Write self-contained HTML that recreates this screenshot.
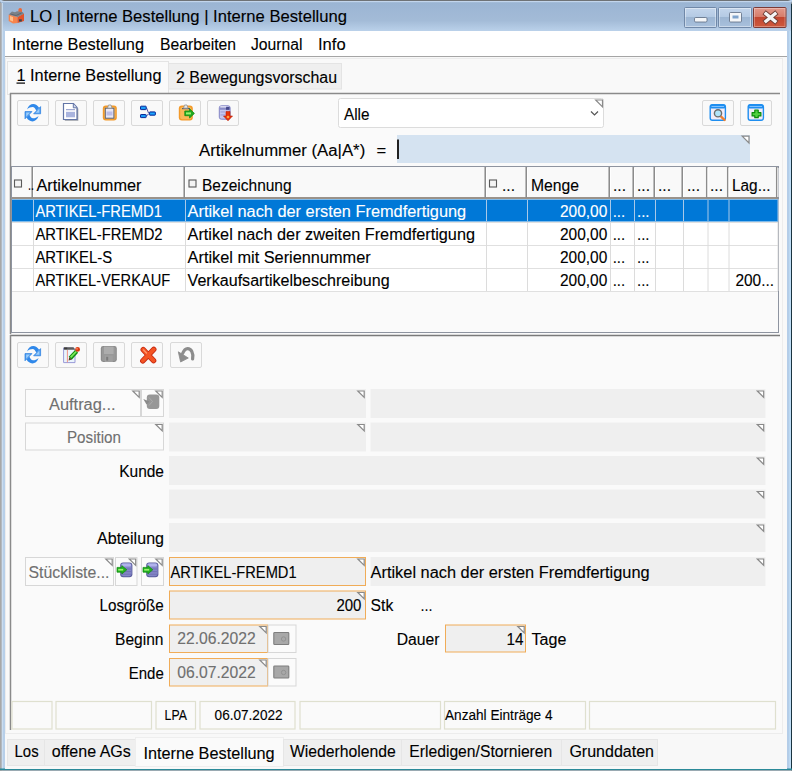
<!DOCTYPE html>
<html><head><meta charset="utf-8"><style>
html,body{margin:0;padding:0;width:792px;height:771px;overflow:hidden;background:#f3f3f3}
svg{display:block}
text{font-family:"Liberation Sans",sans-serif;stroke-width:0.12px}
</style></head><body>
<svg width="792" height="771" viewBox="0 0 792 771">
<rect x="0" y="0" width="792" height="771" fill="#b7cfe9" />
<path d="M0.5,771 L0.5,4 Q0.5,0.5 4,0.5 L788,0.5 Q791.5,0.5 791.5,4 L791.5,771" fill="none" stroke="#6e7276" stroke-width="1"/>
<defs><linearGradient id="tg" x1="0" y1="0" x2="0" y2="1"><stop offset="0" stop-color="#9ab4d3"/><stop offset="0.65" stop-color="#a3bbd7"/><stop offset="1" stop-color="#bad1ea"/></linearGradient><linearGradient id="bg" x1="0" y1="0" x2="0" y2="1"><stop offset="0" stop-color="#c4d6ec"/><stop offset="0.5" stop-color="#b3c9e3"/><stop offset="0.5" stop-color="#9db6d3"/><stop offset="1" stop-color="#a9c1dd"/></linearGradient><linearGradient id="cg" x1="0" y1="0" x2="0" y2="1"><stop offset="0" stop-color="#e39a8c"/><stop offset="0.5" stop-color="#d57a68"/><stop offset="0.5" stop-color="#c24630"/><stop offset="1" stop-color="#cf5a3e"/></linearGradient></defs>
<rect x="1" y="1" width="790" height="30" fill="url(#tg)" />
<rect x="1" y="1" width="790" height="1.2" fill="#c2d5ec" />
<rect x="0" y="3" width="1.8" height="768" fill="#a8a8a8" />
<rect x="1.8" y="3" width="1" height="768" fill="#cfe0f2" />
<rect x="787" y="31" width="4" height="740" fill="#b4cde8" />
<rect x="789.5" y="31" width="1.2" height="740" fill="#c2e4fc" />
<line x1="791.5" y1="4" x2="791.5" y2="771" stroke="#1a3440" stroke-width="1"/>
<rect x="0" y="768.5" width="792" height="1.7" fill="#2b8a99" />
<rect x="0" y="770.2" width="792" height="0.8" fill="#9aa4a8" />
<g><rect x="18.4" y="8" width="3.6" height="5.5" rx="1.8" fill="#ec6a3a"/><path d="M8.7,14.5 L17.5,17 L17.5,23 L13,23.6 L8.7,21 Z" fill="#f7844c"/><path d="M10,16 L13,17 L13,21.5 L10,20.2 Z" fill="#ffc08a"/><path d="M17.5,17 L24,13.5 L24,21 L17.5,23 Z" fill="#e2542a"/><path d="M8.7,14.5 L12,11.6 L15,12.2 L17,11.2 L22.5,12 L24,13.5 L17.5,17 Z" fill="#7c8288"/><path d="M10.5,14 L16,15.5 L21.5,13" fill="none" stroke="#5a6066" stroke-width="0.8"/><rect x="19" y="19.3" width="2.8" height="2.2" fill="#3c4650"/></g>
<text x="30" y="22" font-size="16" fill="#000" stroke="#000" textLength="317" lengthAdjust="spacingAndGlyphs" >LO | Interne Bestellung | Interne Bestellung</text>
<rect x="684.5" y="7.5" width="32" height="20" fill="url(#bg)" stroke="#7088a8" stroke-width="1" rx="1" />
<rect x="685.5" y="8.5" width="30" height="18" fill="none" stroke="rgba(255,255,255,0.4)" stroke-width="1"/>
<rect x="718.5" y="7.5" width="33" height="20" fill="url(#bg)" stroke="#7088a8" stroke-width="1" rx="1" />
<rect x="719.5" y="8.5" width="31" height="18" fill="none" stroke="rgba(255,255,255,0.4)" stroke-width="1"/>
<rect x="753.5" y="7.5" width="32.5" height="20" rx="1" fill="url(#cg)" stroke="#7c3a36" stroke-width="1"/>
<rect x="754.5" y="8.5" width="30.5" height="18" fill="none" stroke="rgba(255,255,255,0.3)" stroke-width="1"/>
<rect x="694.5" y="17.5" width="12.5" height="4.5" rx="1.2" fill="#f4f6f8" stroke="#5a6a80" stroke-width="0.8"/>
<rect x="729.5" y="12.5" width="12" height="9.5" rx="1" fill="#f4f6f8" stroke="#5a6a80" stroke-width="0.8"/>
<rect x="732.5" y="15.5" width="6" height="3" fill="#7fa3cc"/>
<path d="M766,13.8 L775,21.2 M775,13.8 L766,21.2" stroke="#6a3a32" stroke-width="5" stroke-linecap="square"/>
<path d="M766,13.8 L775,21.2 M775,13.8 L766,21.2" stroke="#f4f4f4" stroke-width="3.4" stroke-linecap="square"/>
<rect x="5" y="31" width="782" height="25" fill="#ffffff" />
<rect x="5" y="56" width="782" height="1" fill="#a5a5a5" />
<text x="12" y="50" font-size="16" fill="#000" stroke="#000" textLength="132" lengthAdjust="spacingAndGlyphs" >Interne Bestellung</text>
<text x="160" y="50" font-size="16" fill="#000" stroke="#000" textLength="76" lengthAdjust="spacingAndGlyphs" >Bearbeiten</text>
<text x="251" y="50" font-size="16" fill="#000" stroke="#000" textLength="51.5" lengthAdjust="spacingAndGlyphs" >Journal</text>
<text x="318" y="50" font-size="16" fill="#000" stroke="#000" textLength="27.6" lengthAdjust="spacingAndGlyphs" >Info</text>
<rect x="5" y="57" width="782" height="712" fill="#f8f8f8" />
<rect x="5.5" y="58.5" width="777" height="675" fill="#f9f9f9" stroke="#ececec" stroke-width="1" />
<rect x="7.5" y="61.5" width="161" height="33" fill="#fafafa" stroke="#e4e4e4" stroke-width="1" />
<rect x="168.5" y="63.5" width="173" height="25.5" fill="#efefef" stroke="#e4e4e4" stroke-width="1" />
<text x="16.5" y="81" font-size="16" fill="#000" stroke="#000" textLength="145" lengthAdjust="spacingAndGlyphs" >1 Interne Bestellung</text>
<rect x="16.5" y="82.5" width="8.5" height="1.2" fill="#000" />
<text x="176" y="83" font-size="16" fill="#000" stroke="#000" textLength="161" lengthAdjust="spacingAndGlyphs" >2 Bewegungsvorschau</text>
<rect x="10.5" y="93.5" width="770" height="240" fill="#fafafa" />
<line x1="10" y1="93.5" x2="780" y2="93.5" stroke="#8a8a8a" stroke-width="1.5"/>
<line x1="10.5" y1="93" x2="10.5" y2="334" stroke="#8a8a8a" stroke-width="1.5"/>
<rect x="17.5" y="100.5" width="31" height="25" fill="#f9f9f9" stroke="#d9d9d9" stroke-width="1" rx="1.5" />
<rect x="55.5" y="100.5" width="31" height="25" fill="#f9f9f9" stroke="#d9d9d9" stroke-width="1" rx="1.5" />
<rect x="93.5" y="100.5" width="31" height="25" fill="#f9f9f9" stroke="#d9d9d9" stroke-width="1" rx="1.5" />
<rect x="131.5" y="100.5" width="31" height="25" fill="#f9f9f9" stroke="#d9d9d9" stroke-width="1" rx="1.5" />
<rect x="169.5" y="100.5" width="31" height="25" fill="#f9f9f9" stroke="#d9d9d9" stroke-width="1" rx="1.5" />
<rect x="207.5" y="100.5" width="31" height="25" fill="#f9f9f9" stroke="#d9d9d9" stroke-width="1" rx="1.5" />
<rect x="338.5" y="98.5" width="265" height="29" fill="#ffffff" stroke="#dcdcdc" stroke-width="1" rx="2" />
<text x="344" y="119.6" font-size="16" fill="#000" stroke="#000" textLength="25.5" lengthAdjust="spacingAndGlyphs" >Alle</text>
<path d="M591,111.5 L594.5,115 L598,111.5" fill="none" stroke="#555" stroke-width="1.2"/>
<path d="M595.7,100 L602.5,100 L602.5,106.8 Z" fill="#ffffff" stroke="#8a8a8a" stroke-width="1.2"/>
<rect x="702.5" y="100.5" width="31" height="25" fill="#f9f9f9" stroke="#d9d9d9" stroke-width="1" rx="1.5" />
<rect x="740.5" y="100.5" width="31" height="25" fill="#f9f9f9" stroke="#d9d9d9" stroke-width="1" rx="1.5" />
<text x="199" y="156" font-size="16" fill="#000" stroke="#000" textLength="166.2" lengthAdjust="spacingAndGlyphs" >Artikelnummer (Aa|A*)</text>
<text x="376.6" y="156" font-size="16" fill="#000" stroke="#000" textLength="9.7" lengthAdjust="spacingAndGlyphs" >=</text>
<rect x="397" y="135" width="353" height="28" fill="#d5e3f1" />
<rect x="397" y="139.5" width="2" height="19.5" fill="#222" />
<path d="M742.2,136.2 L749,136.2 L749,143.0 Z" fill="#ffffff" stroke="#8a8a8a" stroke-width="1.2"/>
<rect x="11.5" y="166.5" width="767" height="166" fill="#fafafa" stroke="#8e94a0" stroke-width="1" />
<rect x="12" y="167" width="766" height="31" fill="#f9f9f9" />
<rect x="12" y="199" width="766" height="92" fill="#ffffff" />
<line x1="12" y1="198" x2="778" y2="198" stroke="#9a928a" stroke-width="1.8"/>
<line x1="32.25" y1="167" x2="32.25" y2="198" stroke="#8c8c8c" stroke-width="1.6"/>
<line x1="33.5" y1="168" x2="33.5" y2="197" stroke="#ffffff" stroke-width="1"/>
<line x1="184.25" y1="167" x2="184.25" y2="198" stroke="#8c8c8c" stroke-width="1.6"/>
<line x1="185.5" y1="168" x2="185.5" y2="197" stroke="#ffffff" stroke-width="1"/>
<line x1="485.25" y1="167" x2="485.25" y2="198" stroke="#8c8c8c" stroke-width="1.6"/>
<line x1="486.5" y1="168" x2="486.5" y2="197" stroke="#ffffff" stroke-width="1"/>
<line x1="526.25" y1="167" x2="526.25" y2="198" stroke="#8c8c8c" stroke-width="1.6"/>
<line x1="527.5" y1="168" x2="527.5" y2="197" stroke="#ffffff" stroke-width="1"/>
<line x1="609.25" y1="167" x2="609.25" y2="198" stroke="#8c8c8c" stroke-width="1.6"/>
<line x1="610.5" y1="168" x2="610.5" y2="197" stroke="#ffffff" stroke-width="1"/>
<line x1="633.25" y1="167" x2="633.25" y2="198" stroke="#8c8c8c" stroke-width="1.6"/>
<line x1="634.5" y1="168" x2="634.5" y2="197" stroke="#ffffff" stroke-width="1"/>
<line x1="654.25" y1="167" x2="654.25" y2="198" stroke="#8c8c8c" stroke-width="1.6"/>
<line x1="655.5" y1="168" x2="655.5" y2="197" stroke="#ffffff" stroke-width="1"/>
<line x1="682.25" y1="167" x2="682.25" y2="198" stroke="#8c8c8c" stroke-width="1.6"/>
<line x1="683.5" y1="168" x2="683.5" y2="197" stroke="#ffffff" stroke-width="1"/>
<line x1="706.75" y1="167" x2="706.75" y2="198" stroke="#8c8c8c" stroke-width="1.6"/>
<line x1="708.0" y1="168" x2="708.0" y2="197" stroke="#ffffff" stroke-width="1"/>
<line x1="727.75" y1="167" x2="727.75" y2="198" stroke="#8c8c8c" stroke-width="1.6"/>
<line x1="729.0" y1="168" x2="729.0" y2="197" stroke="#ffffff" stroke-width="1"/>
<line x1="776.75" y1="167" x2="776.75" y2="198" stroke="#8c8c8c" stroke-width="1.6"/>
<line x1="778.0" y1="168" x2="778.0" y2="197" stroke="#ffffff" stroke-width="1"/>
<line x1="12" y1="222.5" x2="778" y2="222.5" stroke="#e0e0e0" stroke-width="1"/>
<line x1="12" y1="245.5" x2="778" y2="245.5" stroke="#e0e0e0" stroke-width="1"/>
<line x1="12" y1="268.5" x2="778" y2="268.5" stroke="#e0e0e0" stroke-width="1"/>
<line x1="12" y1="291.5" x2="778" y2="291.5" stroke="#e0e0e0" stroke-width="1"/>
<line x1="33.5" y1="199" x2="33.5" y2="291" stroke="#dcdcdc" stroke-width="1"/>
<line x1="185.5" y1="199" x2="185.5" y2="291" stroke="#dcdcdc" stroke-width="1"/>
<line x1="486.5" y1="199" x2="486.5" y2="291" stroke="#dcdcdc" stroke-width="1"/>
<line x1="527.5" y1="199" x2="527.5" y2="291" stroke="#dcdcdc" stroke-width="1"/>
<line x1="610.5" y1="199" x2="610.5" y2="291" stroke="#dcdcdc" stroke-width="1"/>
<line x1="634.5" y1="199" x2="634.5" y2="291" stroke="#dcdcdc" stroke-width="1"/>
<line x1="655.5" y1="199" x2="655.5" y2="291" stroke="#dcdcdc" stroke-width="1"/>
<line x1="683.5" y1="199" x2="683.5" y2="291" stroke="#dcdcdc" stroke-width="1"/>
<line x1="708.0" y1="199" x2="708.0" y2="291" stroke="#dcdcdc" stroke-width="1"/>
<line x1="729.0" y1="199" x2="729.0" y2="291" stroke="#dcdcdc" stroke-width="1"/>
<line x1="778.0" y1="199" x2="778.0" y2="291" stroke="#dcdcdc" stroke-width="1"/>
<rect x="12" y="199.5" width="766" height="22" fill="#0078d7" />
<line x1="33.5" y1="199.5" x2="33.5" y2="221.5" stroke="#a8c8e8" stroke-width="1"/>
<line x1="185.5" y1="199.5" x2="185.5" y2="221.5" stroke="#a8c8e8" stroke-width="1"/>
<line x1="486.5" y1="199.5" x2="486.5" y2="221.5" stroke="#a8c8e8" stroke-width="1"/>
<line x1="527.5" y1="199.5" x2="527.5" y2="221.5" stroke="#a8c8e8" stroke-width="1"/>
<line x1="610.5" y1="199.5" x2="610.5" y2="221.5" stroke="#a8c8e8" stroke-width="1"/>
<line x1="634.5" y1="199.5" x2="634.5" y2="221.5" stroke="#a8c8e8" stroke-width="1"/>
<line x1="655.5" y1="199.5" x2="655.5" y2="221.5" stroke="#a8c8e8" stroke-width="1"/>
<line x1="683.5" y1="199.5" x2="683.5" y2="221.5" stroke="#a8c8e8" stroke-width="1"/>
<line x1="708.0" y1="199.5" x2="708.0" y2="221.5" stroke="#a8c8e8" stroke-width="1"/>
<line x1="729.0" y1="199.5" x2="729.0" y2="221.5" stroke="#a8c8e8" stroke-width="1"/>
<line x1="778.0" y1="199.5" x2="778.0" y2="221.5" stroke="#a8c8e8" stroke-width="1"/>
<rect x="14.5" y="180.0" width="7" height="7" fill="#f4f4f4" stroke="#5a5a5a" stroke-width="1.1" />
<text x="28" y="190" font-size="14" fill="#000" stroke="#000" textLength="6" lengthAdjust="spacingAndGlyphs" >..</text>
<text x="36.5" y="190.5" font-size="16" fill="#000" stroke="#000" textLength="105" lengthAdjust="spacingAndGlyphs" >Artikelnummer</text>
<rect x="189.0" y="180.0" width="7" height="7" fill="#f4f4f4" stroke="#5a5a5a" stroke-width="1.1" />
<text x="202" y="190.5" font-size="16" fill="#000" stroke="#000" textLength="89.6" lengthAdjust="spacingAndGlyphs" >Bezeichnung</text>
<rect x="489.5" y="180.0" width="7" height="7" fill="#f4f4f4" stroke="#5a5a5a" stroke-width="1.1" />
<text x="502" y="190.5" font-size="16" fill="#000" stroke="#000" textLength="13" lengthAdjust="spacingAndGlyphs" >...</text>
<text x="531" y="190.5" font-size="16" fill="#000" stroke="#000" textLength="48" lengthAdjust="spacingAndGlyphs" >Menge</text>
<text x="613" y="190.5" font-size="16" fill="#000" stroke="#000" textLength="13" lengthAdjust="spacingAndGlyphs" >...</text>
<text x="637" y="190.5" font-size="16" fill="#000" stroke="#000" textLength="13" lengthAdjust="spacingAndGlyphs" >...</text>
<text x="658" y="190.5" font-size="16" fill="#000" stroke="#000" textLength="13" lengthAdjust="spacingAndGlyphs" >...</text>
<text x="687" y="190.5" font-size="16" fill="#000" stroke="#000" textLength="13" lengthAdjust="spacingAndGlyphs" >...</text>
<text x="710" y="190.5" font-size="16" fill="#000" stroke="#000" textLength="13" lengthAdjust="spacingAndGlyphs" >...</text>
<text x="732" y="190.5" font-size="16" fill="#000" stroke="#000" textLength="38.5" lengthAdjust="spacingAndGlyphs" >Lag...</text>
<text x="35.4" y="216.5" font-size="16" fill="#fff" stroke="#fff" textLength="126.5" lengthAdjust="spacingAndGlyphs" >ARTIKEL-FREMD1</text>
<text x="187.6" y="216.5" font-size="16" fill="#fff" stroke="#fff" textLength="278.6" lengthAdjust="spacingAndGlyphs" >Artikel nach der ersten Fremdfertigung</text>
<text x="560" y="216.5" font-size="16" fill="#fff" stroke="#fff" textLength="47.3" lengthAdjust="spacingAndGlyphs" >200,00</text>
<text x="612.7" y="216.5" font-size="16" fill="#fff" stroke="#fff" textLength="12.5" lengthAdjust="spacingAndGlyphs" >...</text>
<text x="637" y="216.5" font-size="16" fill="#fff" stroke="#fff" textLength="12.5" lengthAdjust="spacingAndGlyphs" >...</text>
<text x="35.4" y="240" font-size="16" fill="#000" stroke="#000" textLength="127.19999999999999" lengthAdjust="spacingAndGlyphs" >ARTIKEL-FREMD2</text>
<text x="187.6" y="240" font-size="16" fill="#000" stroke="#000" textLength="287.4" lengthAdjust="spacingAndGlyphs" >Artikel nach der zweiten Fremdfertigung</text>
<text x="560" y="240" font-size="16" fill="#000" stroke="#000" textLength="47.3" lengthAdjust="spacingAndGlyphs" >200,00</text>
<text x="612.7" y="240" font-size="16" fill="#000" stroke="#000" textLength="12.5" lengthAdjust="spacingAndGlyphs" >...</text>
<text x="637" y="240" font-size="16" fill="#000" stroke="#000" textLength="12.5" lengthAdjust="spacingAndGlyphs" >...</text>
<text x="35.4" y="263" font-size="16" fill="#000" stroke="#000" textLength="76.69999999999999" lengthAdjust="spacingAndGlyphs" >ARTIKEL-S</text>
<text x="187.6" y="263" font-size="16" fill="#000" stroke="#000" textLength="183.1" lengthAdjust="spacingAndGlyphs" >Artikel mit Seriennummer</text>
<text x="560" y="263" font-size="16" fill="#000" stroke="#000" textLength="47.3" lengthAdjust="spacingAndGlyphs" >200,00</text>
<text x="612.7" y="263" font-size="16" fill="#000" stroke="#000" textLength="12.5" lengthAdjust="spacingAndGlyphs" >...</text>
<text x="637" y="263" font-size="16" fill="#000" stroke="#000" textLength="12.5" lengthAdjust="spacingAndGlyphs" >...</text>
<text x="35.4" y="286" font-size="16" fill="#000" stroke="#000" textLength="134.79999999999998" lengthAdjust="spacingAndGlyphs" >ARTIKEL-VERKAUF</text>
<text x="187.6" y="286" font-size="16" fill="#000" stroke="#000" textLength="202.00000000000003" lengthAdjust="spacingAndGlyphs" >Verkaufsartikelbeschreibung</text>
<text x="560" y="286" font-size="16" fill="#000" stroke="#000" textLength="47.3" lengthAdjust="spacingAndGlyphs" >200,00</text>
<text x="612.7" y="286" font-size="16" fill="#000" stroke="#000" textLength="12.5" lengthAdjust="spacingAndGlyphs" >...</text>
<text x="637" y="286" font-size="16" fill="#000" stroke="#000" textLength="12.5" lengthAdjust="spacingAndGlyphs" >...</text>
<text x="735.5" y="286" font-size="16" fill="#000" stroke="#000" textLength="38.5" lengthAdjust="spacingAndGlyphs" >200...</text>
<rect x="10.5" y="335.5" width="770" height="394" fill="#fafafa" />
<line x1="10" y1="335.5" x2="780" y2="335.5" stroke="#7a7a7a" stroke-width="1.5"/>
<line x1="10.5" y1="335" x2="10.5" y2="730" stroke="#8a8a8a" stroke-width="1.5"/>
<rect x="17.5" y="342.5" width="31" height="25" fill="#f9f9f9" stroke="#d9d9d9" stroke-width="1" rx="1.5" />
<rect x="55.5" y="342.5" width="31" height="25" fill="#f9f9f9" stroke="#d9d9d9" stroke-width="1" rx="1.5" />
<rect x="93.5" y="342.5" width="31" height="25" fill="#f9f9f9" stroke="#d9d9d9" stroke-width="1" rx="1.5" />
<rect x="131.5" y="342.5" width="31" height="25" fill="#f9f9f9" stroke="#d9d9d9" stroke-width="1" rx="1.5" />
<rect x="170.5" y="342.5" width="31" height="25" fill="#f9f9f9" stroke="#d9d9d9" stroke-width="1" rx="1.5" />
<rect x="25.5" y="389.5" width="115" height="27" fill="#fbfbfb" stroke="#d7d7d7" stroke-width="1" />
<path d="M132.79999999999998,391 L139.2,391 L139.2,397.4 Z" fill="#ffffff" stroke="#8a8a8a" stroke-width="1.2"/>
<rect x="141.5" y="389.5" width="22" height="27" fill="#fbfbfb" stroke="#d7d7d7" stroke-width="1" />
<path d="M155.79999999999998,391 L162.2,391 L162.2,397.4 Z" fill="#ffffff" stroke="#8a8a8a" stroke-width="1.2"/>
<text x="49" y="409.5" font-size="16" fill="#707070" stroke="#707070" textLength="66.5" lengthAdjust="spacingAndGlyphs" >Auftrag...</text>
<rect x="169" y="389" width="197" height="29" fill="#efefef" />
<path d="M357.8,391 L364.2,391 L364.2,397.4 Z" fill="#ffffff" stroke="#8a8a8a" stroke-width="1.2"/>
<rect x="370.5" y="389" width="395" height="29" fill="#efefef" />
<path d="M757.3000000000001,391 L763.7,391 L763.7,397.4 Z" fill="#ffffff" stroke="#8a8a8a" stroke-width="1.2"/>
<rect x="25.5" y="423.0" width="138" height="27" fill="#fbfbfb" stroke="#d7d7d7" stroke-width="1" />
<path d="M155.79999999999998,424.5 L162.2,424.5 L162.2,430.9 Z" fill="#ffffff" stroke="#8a8a8a" stroke-width="1.2"/>
<text x="67" y="442.5" font-size="16" fill="#707070" stroke="#707070" textLength="54" lengthAdjust="spacingAndGlyphs" >Position</text>
<rect x="169" y="422.5" width="197" height="29" fill="#efefef" />
<path d="M357.8,424.5 L364.2,424.5 L364.2,430.9 Z" fill="#ffffff" stroke="#8a8a8a" stroke-width="1.2"/>
<rect x="370.5" y="422.5" width="395" height="29" fill="#efefef" />
<path d="M757.3000000000001,424.5 L763.7,424.5 L763.7,430.9 Z" fill="#ffffff" stroke="#8a8a8a" stroke-width="1.2"/>
<text x="164" y="477" font-size="16" fill="#000" stroke="#000" textLength="44.8" lengthAdjust="spacingAndGlyphs" text-anchor="end" >Kunde</text>
<rect x="169" y="456" width="596.5" height="29" fill="#efefef" />
<path d="M757.3000000000001,458 L763.7,458 L763.7,464.4 Z" fill="#ffffff" stroke="#8a8a8a" stroke-width="1.2"/>
<rect x="169" y="489.5" width="596.5" height="29" fill="#efefef" />
<path d="M757.3000000000001,491.5 L763.7,491.5 L763.7,497.9 Z" fill="#ffffff" stroke="#8a8a8a" stroke-width="1.2"/>
<text x="164" y="543.7" font-size="16" fill="#000" stroke="#000" textLength="67" lengthAdjust="spacingAndGlyphs" text-anchor="end" >Abteilung</text>
<rect x="169" y="523" width="596.5" height="29" fill="#efefef" />
<path d="M757.3000000000001,525 L763.7,525 L763.7,531.4 Z" fill="#ffffff" stroke="#8a8a8a" stroke-width="1.2"/>
<rect x="25.5" y="557.5" width="88" height="28" fill="#fbfbfb" stroke="#d7d7d7" stroke-width="1" />
<path d="M105.8,559 L112.2,559 L112.2,565.4 Z" fill="#ffffff" stroke="#8a8a8a" stroke-width="1.2"/>
<text x="28.5" y="577.6" font-size="16" fill="#707070" stroke="#707070" textLength="81" lengthAdjust="spacingAndGlyphs" >Stückliste...</text>
<rect x="115.5" y="557.5" width="21.5" height="28" fill="#fbfbfb" stroke="#d7d7d7" stroke-width="1" />
<path d="M129.29999999999998,559 L135.7,559 L135.7,565.4 Z" fill="#ffffff" stroke="#8a8a8a" stroke-width="1.2"/>
<rect x="141.5" y="557.5" width="22" height="28" fill="#fbfbfb" stroke="#d7d7d7" stroke-width="1" />
<path d="M155.79999999999998,559 L162.2,559 L162.2,565.4 Z" fill="#ffffff" stroke="#8a8a8a" stroke-width="1.2"/>
<rect x="169.5" y="557.5" width="196" height="28" fill="#efefef" stroke="#f0ac58" stroke-width="1" />
<path d="M357.8,559 L364.2,559 L364.2,565.4 Z" fill="#ffffff" stroke="#8a8a8a" stroke-width="1.2"/>
<text x="170.6" y="577.8" font-size="16" fill="#000" stroke="#000" textLength="126" lengthAdjust="spacingAndGlyphs" >ARTIKEL-FREMD1</text>
<rect x="370.5" y="557" width="395" height="29" fill="#efefef" />
<path d="M757.3000000000001,559 L763.7,559 L763.7,565.4 Z" fill="#ffffff" stroke="#8a8a8a" stroke-width="1.2"/>
<text x="370.6" y="578.4" font-size="16" fill="#000" stroke="#000" textLength="279" lengthAdjust="spacingAndGlyphs" >Artikel nach der ersten Fremdfertigung</text>
<text x="163.8" y="611.2" font-size="16" fill="#000" stroke="#000" textLength="64.2" lengthAdjust="spacingAndGlyphs" text-anchor="end" >Losgröße</text>
<rect x="169.5" y="591.0" width="196" height="28" fill="#efefef" stroke="#f0ac58" stroke-width="1" />
<path d="M357.8,592.5 L364.2,592.5 L364.2,598.9 Z" fill="#ffffff" stroke="#8a8a8a" stroke-width="1.2"/>
<text x="361.4" y="611" font-size="16" fill="#000" stroke="#000" textLength="25" lengthAdjust="spacingAndGlyphs" text-anchor="end" >200</text>
<text x="370.6" y="611.4" font-size="16" fill="#000" stroke="#000" textLength="22.7" lengthAdjust="spacingAndGlyphs" >Stk</text>
<text x="420.6" y="611.4" font-size="16" fill="#000" stroke="#000" textLength="12" lengthAdjust="spacingAndGlyphs" >...</text>
<text x="163.5" y="644.6" font-size="16" fill="#000" stroke="#000" textLength="48.5" lengthAdjust="spacingAndGlyphs" text-anchor="end" >Beginn</text>
<rect x="169.5" y="625.0" width="98" height="27.5" fill="#efefef" stroke="#f0ac58" stroke-width="1" />
<path d="M259.8,626.5 L266.2,626.5 L266.2,632.9 Z" fill="#ffffff" stroke="#8a8a8a" stroke-width="1.2"/>
<text x="177.2" y="644.4" font-size="16" fill="#707070" stroke="#707070" textLength="78.6" lengthAdjust="spacingAndGlyphs" >22.06.2022</text>
<rect x="268.0" y="625.0" width="28" height="27.5" fill="#fbfbfb" stroke="#d7d7d7" stroke-width="1" />
<text x="439.5" y="644.7" font-size="16" fill="#000" stroke="#000" textLength="42.8" lengthAdjust="spacingAndGlyphs" text-anchor="end" >Dauer</text>
<rect x="445.5" y="625.0" width="80" height="27" fill="#efefef" stroke="#f0ac58" stroke-width="1" />
<path d="M517.8000000000001,626.5 L524.2,626.5 L524.2,632.9 Z" fill="#ffffff" stroke="#8a8a8a" stroke-width="1.2"/>
<text x="523.6" y="644.7" font-size="16" fill="#000" stroke="#000" textLength="17" lengthAdjust="spacingAndGlyphs" text-anchor="end" >14</text>
<text x="531.6" y="644.7" font-size="16" fill="#000" stroke="#000" textLength="34.8" lengthAdjust="spacingAndGlyphs" >Tage</text>
<text x="163.8" y="678.5" font-size="16" fill="#000" stroke="#000" textLength="35" lengthAdjust="spacingAndGlyphs" text-anchor="end" >Ende</text>
<rect x="169.5" y="658.5" width="98" height="27.5" fill="#efefef" stroke="#f0ac58" stroke-width="1" />
<path d="M259.8,660 L266.2,660 L266.2,666.4 Z" fill="#ffffff" stroke="#8a8a8a" stroke-width="1.2"/>
<text x="177.2" y="678.3" font-size="16" fill="#707070" stroke="#707070" textLength="78.6" lengthAdjust="spacingAndGlyphs" >06.07.2022</text>
<rect x="268.0" y="658.5" width="28" height="27.5" fill="#fbfbfb" stroke="#d7d7d7" stroke-width="1" />
<rect x="273.8" y="632.5" width="15" height="12" rx="0.8" fill="#a8a8a8" stroke="#7e7e7e" stroke-width="1.1"/>
<circle cx="283.6" cy="639.0" r="2.2" fill="none" stroke="#909090" stroke-width="0.9"/>
<rect x="273.8" y="666" width="15" height="12" rx="0.8" fill="#a8a8a8" stroke="#7e7e7e" stroke-width="1.1"/>
<circle cx="283.6" cy="672.5" r="2.2" fill="none" stroke="#909090" stroke-width="0.9"/>
<rect x="12.0" y="701.5" width="40.0" height="27.5" fill="none" stroke="#dfe0cf" stroke-width="1.2" />
<rect x="56.0" y="701.5" width="95.5" height="27.5" fill="none" stroke="#dfe0cf" stroke-width="1.2" />
<rect x="156.0" y="701.5" width="39.5" height="27.5" fill="none" stroke="#dfe0cf" stroke-width="1.2" />
<rect x="200.0" y="701.5" width="95.0" height="27.5" fill="none" stroke="#dfe0cf" stroke-width="1.2" />
<rect x="300.0" y="701.5" width="140.5" height="27.5" fill="none" stroke="#dfe0cf" stroke-width="1.2" />
<rect x="444.5" y="701.5" width="141" height="27.5" fill="none" stroke="#dfe0cf" stroke-width="1.2" />
<rect x="589.5" y="701.5" width="186" height="27.5" fill="none" stroke="#dfe0cf" stroke-width="1.2" />
<text x="164.6" y="720.3" font-size="14" fill="#000" stroke="#000" textLength="22.3" lengthAdjust="spacingAndGlyphs" >LPA</text>
<text x="214.6" y="720.3" font-size="14" fill="#000" stroke="#000" textLength="68" lengthAdjust="spacingAndGlyphs" >06.07.2022</text>
<text x="445" y="720.3" font-size="14" fill="#000" stroke="#000" textLength="107.5" lengthAdjust="spacingAndGlyphs" >Anzahl Einträge 4</text>
<rect x="7.5" y="739.5" width="37" height="26" fill="#efefef" stroke="#e6e6e6" stroke-width="1" />
<rect x="44.5" y="739.5" width="91" height="26" fill="#efefef" stroke="#e6e6e6" stroke-width="1" />
<rect x="135.5" y="737.5" width="148" height="29" fill="#fafafa" stroke="#eeeeee" stroke-width="1" />
<rect x="283.5" y="739.5" width="118" height="26" fill="#efefef" stroke="#e6e6e6" stroke-width="1" />
<rect x="401.5" y="739.5" width="160" height="26" fill="#efefef" stroke="#e6e6e6" stroke-width="1" />
<rect x="561.5" y="739.5" width="96" height="26" fill="#efefef" stroke="#e6e6e6" stroke-width="1" />
<text x="14.6" y="757.4" font-size="16" fill="#000" stroke="#000" textLength="24" lengthAdjust="spacingAndGlyphs" >Los</text>
<text x="51.8" y="757.2" font-size="16" fill="#000" stroke="#000" textLength="79" lengthAdjust="spacingAndGlyphs" >offene AGs</text>
<text x="143.4" y="758.7" font-size="16" fill="#000" stroke="#000" textLength="131.3" lengthAdjust="spacingAndGlyphs" >Interne Bestellung</text>
<text x="290" y="757.3" font-size="16" fill="#000" stroke="#000" textLength="105.8" lengthAdjust="spacingAndGlyphs" >Wiederholende</text>
<text x="409.3" y="757.3" font-size="16" fill="#000" stroke="#000" textLength="143" lengthAdjust="spacingAndGlyphs" >Erledigen/Stornieren</text>
<text x="569.4" y="757.3" font-size="16" fill="#000" stroke="#000" textLength="84.6" lengthAdjust="spacingAndGlyphs" >Grunddaten</text>
<g transform="translate(22,102)"><path d="M5,7.4 C6.3,3.6 8.8,2 11.2,2 C13.6,2 15.6,3.3 17.1,5.8 L14.3,8.8 C13.3,6.6 12.2,5.1 10.6,5.1 C8.7,5.1 6.8,5.9 5,7.4 Z" fill="#2f88ea"/><path d="M18.6,4.6 L18.6,11.8 L11.6,11.8 Z" fill="#4a9cf0" stroke="#2a7ee0" stroke-width="0.7" stroke-linejoin="round"/><path d="M17.4,6.6 L17.4,10.8 L13.6,10.8 Z" fill="#9ccdfa"/><g transform="rotate(180 10.8 10.7)"><path d="M5,7.4 C6.3,3.6 8.8,2 11.2,2 C13.6,2 15.6,3.3 17.1,5.8 L14.3,8.8 C13.3,6.6 12.2,5.1 10.6,5.1 C8.7,5.1 6.8,5.9 5,7.4 Z" fill="#2f88ea"/><path d="M18.6,4.6 L18.6,11.8 L11.6,11.8 Z" fill="#4a9cf0" stroke="#2a7ee0" stroke-width="0.7" stroke-linejoin="round"/><path d="M17.4,6.6 L17.4,10.8 L13.6,10.8 Z" fill="#9ccdfa"/></g></g>
<g transform="translate(60,101)"><path d="M4,3 L13.5,3 L17.5,7 L17.5,19 L4,19 Z" fill="#4a5060" opacity="0.55" transform="translate(0.8,0.8)"/><path d="M3.5,2.5 L13.5,2.5 L17,6.5 L17,18.5 L3.5,18.5 Z" fill="#ffffff" stroke="#6275a6" stroke-width="1.2"/><path d="M13.3,2.8 L13.3,6.8 L16.8,6.8" fill="#d0d8ec" stroke="#6275a6" stroke-width="1"/><rect x="6" y="8.2" width="9" height="1" fill="#8a96c8"/><rect x="6" y="10.8" width="9" height="5.5" fill="#a9b4de"/></g>
<g transform="translate(98,101)"><rect x="4.8" y="4.6" width="14" height="15" rx="3" fill="#f39a2a"/><rect x="6.2" y="6" width="11.2" height="12.2" rx="2" fill="#f9b858"/><rect x="7.3" y="7.2" width="8.6" height="10" fill="#e9e8f6" stroke="#5b6278" stroke-width="1"/><rect x="8.5" y="10.5" width="6" height="4" fill="#bcbde8"/><path d="M9.5,7.2 L10.5,4 L13,4 L14,7.2 Z" fill="#e8e8e8" stroke="#909090" stroke-width="0.8"/></g>
<g transform="translate(136,101)"><path d="M10.5,6.8 L12.6,12.2 M10.5,15 L12.6,12.8" stroke="#3a3a90" stroke-width="0.9" fill="none"/><rect x="4.5" y="5.2" width="5.7" height="3.4000000000000004" rx="0.6" fill="#1590f0" stroke="#0a2a98" stroke-width="1"/><rect x="5.5" y="6.300000000000001" width="3.7" height="1.2000000000000002" fill="#20a8ff"/><rect x="4.5" y="13.5" width="5.7" height="3.0999999999999996" rx="0.6" fill="#1590f0" stroke="#0a2a98" stroke-width="1"/><rect x="5.5" y="14.6" width="3.7" height="0.8999999999999995" fill="#20a8ff"/><rect x="13.4" y="10.9" width="6" height="3.3" rx="0.6" fill="#1590f0" stroke="#0a2a98" stroke-width="1"/><rect x="14.4" y="12.0" width="4" height="1.0999999999999996" fill="#20a8ff"/></g>
<g transform="translate(174,101)"><rect x="4.8" y="4.6" width="14" height="15" rx="3" fill="#f39a2a"/><rect x="6.2" y="6" width="11.2" height="12.2" rx="2" fill="#f9b858"/><rect x="8" y="7" width="8" height="1.2" fill="#555e70"/><path d="M9.5,7.2 L10.5,4 L13,4 L14,7.2 Z" fill="#e8e8e8" stroke="#909090" stroke-width="0.8"/><path d="M10.8,10 L15.6,10 L15.6,7.8 L20.4,12.4 L15.6,17 L15.6,14.7 L10.8,14.7 Z" fill="#22aa22" stroke="#108a10" stroke-width="0.8" stroke-linejoin="round"/><rect x="12" y="11.4" width="5" height="2" fill="#9af070"/></g>
<g transform="translate(212,101)"><rect x="7.3" y="4.8" width="10.8" height="13.4" rx="2" fill="#c6c8f0" stroke="#8284c4" stroke-width="1"/><path d="M8,6 L17.5,6 L17.5,8.8 L8,8.8 Z" fill="#8a8cc8"/><path d="M14,6 L17.5,6 L17.5,8.8 L14,8.8 Z" fill="#45478a"/><rect x="8.2" y="5.5" width="6" height="0.9" fill="#ffffff"/><rect x="8.5" y="10.5" width="4.5" height="0.9" fill="#9496d4"/><rect x="8.5" y="13.5" width="4.5" height="0.9" fill="#9496d4"/><path d="M14,10.4 L18,10.4 L18,15 L20.5,15 L16,19.8 L11.5,15 L14,15 Z" fill="#e8340a" stroke="#b81800" stroke-width="0.6" stroke-linejoin="round"/><circle cx="16" cy="16" r="1.3" fill="#ffa040"/></g>
<g transform="translate(706,101)"><rect x="4.2" y="3.6" width="15.2" height="15.6" rx="2.2" fill="#f2ecf8" stroke="#1e8ef0" stroke-width="1.4"/><rect x="4.2" y="3.6" width="15.2" height="4" rx="1.5" fill="#1e8ef0"/><rect x="5.5" y="5" width="12.5" height="0.9" fill="#8cc8ff"/><path d="M15.3,15.8 L18.6,19" stroke="#f08030" stroke-width="2.4" stroke-linecap="round"/><circle cx="12" cy="12.3" r="3.6" fill="#b0e4fa" stroke="#6c6c6c" stroke-width="1.4"/></g>
<g transform="translate(744,101)"><rect x="4.2" y="3.6" width="15.2" height="15.6" rx="2.2" fill="#f2ecf8" stroke="#1e8ef0" stroke-width="1.4"/><rect x="4.2" y="3.6" width="15.2" height="4" rx="1.5" fill="#1e8ef0"/><rect x="5.5" y="5" width="12.5" height="0.9" fill="#8cc8ff"/><path d="M10.8,9 L14.2,9 L14.2,11.6 L16.9,11.6 L16.9,14.9 L14.2,14.9 L14.2,16.7 L10.8,16.7 L10.8,14.9 L8.1,14.9 L8.1,11.6 L10.8,11.6 Z" fill="#50d040" stroke="#0b8a0b" stroke-width="1.2" stroke-linejoin="round"/></g>
<g transform="translate(22,344)"><path d="M5,7.4 C6.3,3.6 8.8,2 11.2,2 C13.6,2 15.6,3.3 17.1,5.8 L14.3,8.8 C13.3,6.6 12.2,5.1 10.6,5.1 C8.7,5.1 6.8,5.9 5,7.4 Z" fill="#2f88ea"/><path d="M18.6,4.6 L18.6,11.8 L11.6,11.8 Z" fill="#4a9cf0" stroke="#2a7ee0" stroke-width="0.7" stroke-linejoin="round"/><path d="M17.4,6.6 L17.4,10.8 L13.6,10.8 Z" fill="#9ccdfa"/><g transform="rotate(180 10.8 10.7)"><path d="M5,7.4 C6.3,3.6 8.8,2 11.2,2 C13.6,2 15.6,3.3 17.1,5.8 L14.3,8.8 C13.3,6.6 12.2,5.1 10.6,5.1 C8.7,5.1 6.8,5.9 5,7.4 Z" fill="#2f88ea"/><path d="M18.6,4.6 L18.6,11.8 L11.6,11.8 Z" fill="#4a9cf0" stroke="#2a7ee0" stroke-width="0.7" stroke-linejoin="round"/><path d="M17.4,6.6 L17.4,10.8 L13.6,10.8 Z" fill="#9ccdfa"/></g></g>
<g transform="translate(60,343)"><path d="M3.6,5 L13.5,5 L15,6.5 L15,19.6 L3.6,19.6 Z" fill="#eaf4fc" stroke="#9a9ad8" stroke-width="1"/><path d="M3.8,4.3 L13.5,4.3 L15.2,6.8 L3.8,6.8 Z" fill="#5c5c5c"/><rect x="4.2" y="4.6" width="3" height="1.6" fill="#3a3a3a"/><rect x="6.9" y="7" width="0.9" height="12.3" fill="#f08878"/><path d="M10.2,15.2 L16.6,8.4" stroke="#108c10" stroke-width="4.2"/><path d="M10.6,14.4 L16.2,8.5" stroke="#7aea5a" stroke-width="1.8"/><path d="M8.6,17.4 L9.2,14.2 L11.8,16.4 Z" fill="#5a3a20"/><circle cx="17.6" cy="6.4" r="2.4" fill="#d83810"/><circle cx="17" cy="5.8" r="1" fill="#ff7a50"/></g>
<g transform="translate(98,343)"><rect x="2.8" y="3" width="16" height="16" rx="2.4" fill="#8a8a8a"/><rect x="3.8" y="4" width="14" height="14" rx="1.8" fill="#999999"/><rect x="6" y="3.6" width="9.6" height="7.4" fill="#adadad"/><rect x="6.8" y="12.6" width="8" height="6.4" fill="#a0a0a0"/><rect x="8.2" y="13.8" width="2" height="3.8" fill="#7c7c7c"/></g>
<g transform="translate(137,343)"><path d="M6.2,6.6 L16.6,17.6 M16.8,6.4 L5.8,17.8" stroke="#c42810" stroke-width="5.4" stroke-linecap="round"/><path d="M6.2,6.6 L16.6,17.6 M16.8,6.4 L5.8,17.8" stroke="#f45424" stroke-width="3.8" stroke-linecap="round"/><path d="M6.6,7 L9.5,10" stroke="#ff9a70" stroke-width="1.2" stroke-linecap="round"/></g>
<g transform="translate(175,343)"><path d="M17.6,16 C18.8,10 16,5.5 12.6,5.6 C10,5.7 8.6,8 7.6,10.5" fill="none" stroke="#8c8c8c" stroke-width="3.2" stroke-linecap="round"/><path d="M3.3,8.8 L13.3,15 L5.6,19 Z" fill="#8c8c8c" stroke="#8c8c8c" stroke-width="0.8" stroke-linejoin="round"/></g>
<g transform="translate(140,388)"><rect x="6.8" y="6.4" width="12.5" height="14.5" rx="3" fill="#979797"/><path d="M3.3,11 L9.5,13.5 L6.5,16.5 Z" fill="#8a8a8a"/><path d="M9,9.5 L12.5,13.5 L9,17.5" fill="none" stroke="#b0b0b0" stroke-width="0.8"/></g>
<g transform="translate(115,555)"><rect x="5.2" y="7.5" width="12.2" height="14.7" rx="3" fill="#5a5c9c"/><rect x="6" y="8.2" width="10.6" height="13" rx="2.4" fill="#8486c8"/><rect x="6.5" y="8.4" width="9.6" height="3" rx="1.5" fill="#b0b2ec"/><path d="M7,14 L16,14 M7,16.6 L16,16.6 M7,19.2 L16,19.2" stroke="#6a6cac" stroke-width="0.7"/><path d="M2,12.4 L6.8,12.4 L6.8,10.6 L11.8,14.8 L6.8,19 L6.8,17.2 L2,17.2 Z" fill="#22b020" stroke="#0e8a0e" stroke-width="0.7" stroke-linejoin="round"/><rect x="3.2" y="13.9" width="5" height="1.7" fill="#9af070"/></g>
<g transform="translate(141,555)"><rect x="5.2" y="7.5" width="12.2" height="14.7" rx="3" fill="#5a5c9c"/><rect x="6" y="8.2" width="10.6" height="13" rx="2.4" fill="#8486c8"/><rect x="6.5" y="8.4" width="9.6" height="3" rx="1.5" fill="#b0b2ec"/><path d="M7,14 L16,14 M7,16.6 L16,16.6 M7,19.2 L16,19.2" stroke="#6a6cac" stroke-width="0.7"/><path d="M2,12.4 L6.8,12.4 L6.8,10.6 L11.8,14.8 L6.8,19 L6.8,17.2 L2,17.2 Z" fill="#22b020" stroke="#0e8a0e" stroke-width="0.7" stroke-linejoin="round"/><rect x="3.2" y="13.9" width="5" height="1.7" fill="#9af070"/></g>
</svg>
</body></html>
